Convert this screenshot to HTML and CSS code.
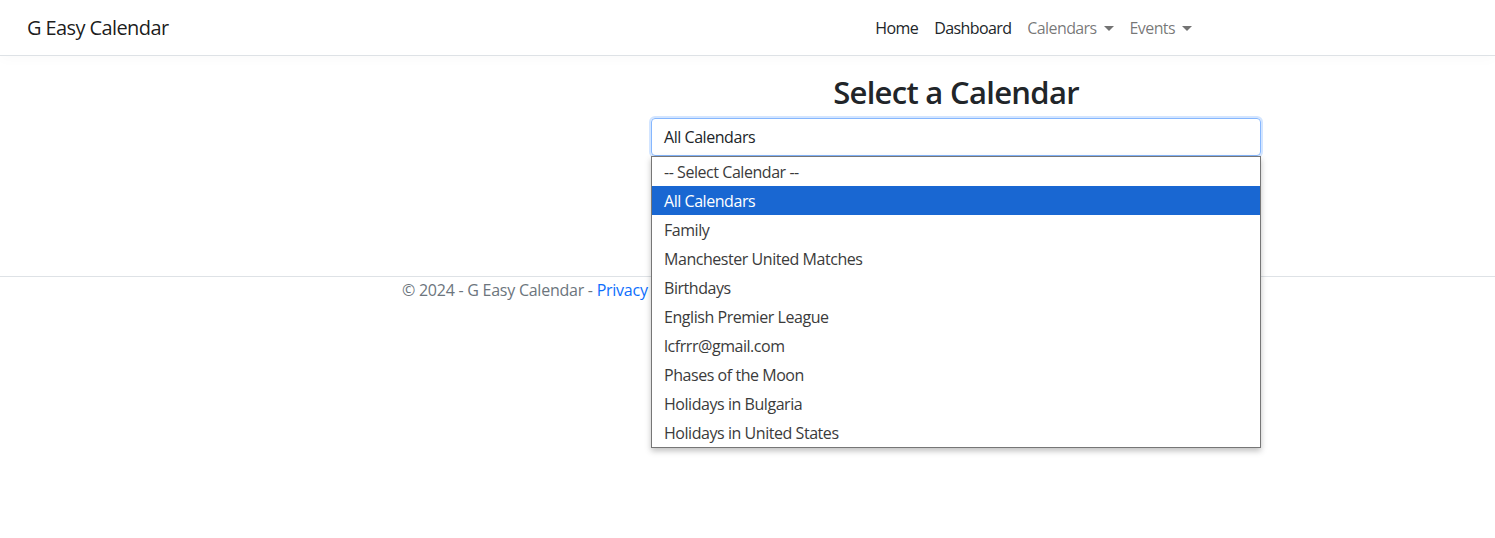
FILE: index.html
```html
<!DOCTYPE html>
<html lang="en">
<head>
<meta charset="utf-8">
<title>G Easy Calendar</title>
<link rel="stylesheet" href="styles.css">
</head>
<body>
<header class="navbar">
  <a class="brand" href="#">G Easy Calendar</a>
  <ul class="nav">
    <li><a class="nav-link dark" href="#">Home</a></li>
    <li><a class="nav-link dark" href="#">Dashboard</a></li>
    <li><a class="nav-link muted toggle" href="#">Calendars</a></li>
    <li><a class="nav-link muted toggle" href="#">Events</a></li>
  </ul>
</header>
<main class="main">
  <div class="picker">
    <h2 class="title">Select a Calendar</h2>
    <div class="select-wrap">
      <div class="select">All Calendars</div>
      <ul class="options">
        <li class="option">-- Select Calendar --</li>
        <li class="option selected">All Calendars</li>
        <li class="option">Family</li>
        <li class="option">Manchester United Matches</li>
        <li class="option">Birthdays</li>
        <li class="option">English Premier League</li>
        <li class="option">lcfrrr@gmail.com</li>
        <li class="option">Phases of the Moon</li>
        <li class="option">Holidays in Bulgaria</li>
        <li class="option">Holidays in United States</li>
      </ul>
    </div>
  </div>
</main>
<footer class="footer">
  <div class="footer-inner">© 2024 - G Easy Calendar - <a href="#" class="privacy">Privacy</a></div>
</footer>
</body>
</html>
```
FILE: styles.css
```css
* { box-sizing: border-box; }
html, body { margin: 0; padding: 0; }
html, body { min-height: 538px; }
body {
  font-family: "Open Sans", "Noto Sans", "Liberation Sans", sans-serif;
  font-size: 16px;
  color: #212529;
  background: #fff;
  letter-spacing: -0.45px;
}
a { text-decoration: none; }
.navbar {
  display: flex;
  align-items: center;
  height: 56px;
  border-bottom: 1px solid #dee2e6;
  padding: 0 0 0 27px;
  box-shadow: 0 0.25rem 0.75rem rgba(0,0,0,0.02);
}
.brand {
  font-size: 20px;
  color: rgba(0,0,0,0.9);
  letter-spacing: -0.6px;
}
.nav {
  list-style: none;
  display: flex;
  margin: 0 295px 0 auto;
  padding: 0;
}
.nav-link {
  display: block;
  padding: 8px 8px;
  font-size: 16px;
  letter-spacing: -0.6px;
}
.nav-link.dark { color: #212529; }
.nav-link.muted { color: rgba(0,0,0,0.55); }
.toggle::after {
  content: "";
  display: inline-block;
  margin-left: 7px;
  vertical-align: 3px;
  border-top: 5px solid;
  border-right: 5px solid transparent;
  border-left: 5px solid transparent;
}
.main {
  height: 221px;
  padding-top: 17px;
  border-bottom: 1px solid #dee2e6;
}
.picker {
  margin-left: 651px;
  width: 610px;
}
.title {
  margin: 0 0 7px;
  text-align: center;
  font-size: 31px;
  line-height: 38px;
  font-weight: 600;
  color: #212529;
  letter-spacing: -0.7px;
}
.select-wrap { position: relative; }
.select {
  height: 38px;
  border: 1px solid #86b7fe;
  border-radius: 4px;
  box-shadow: 0 0 0 2px rgba(13,110,253,0.18);
  padding: 0 12px;
  line-height: 36px;
  color: #212529;
}
.options {
  position: absolute;
  top: 38px;
  left: 0;
  width: 610px;
  margin: 0;
  padding: 0;
  list-style: none;
  background: #fff;
  border: 1px solid #767676;
  box-shadow: 0 3px 6px rgba(0,0,0,0.25);
  z-index: 5;
}
.option {
  height: 29px;
  line-height: 30px;
  padding: 0 12px;
  color: #3b3b3b;
}
.option.selected {
  background: #1967d2;
  color: #fff;
}
.footer {
  padding-top: 1px;
}
.footer-inner {
  margin-left: 402px;
  color: #6c757d;
  line-height: 24px;
  letter-spacing: -0.25px;
}
.privacy { color: #0d6efd; }
```
